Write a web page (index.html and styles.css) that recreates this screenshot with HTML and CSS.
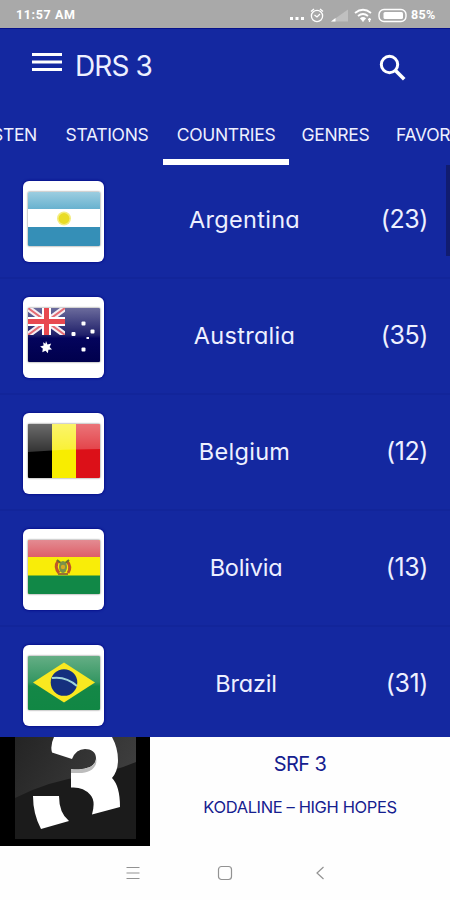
FILE: index.html
```html
<!DOCTYPE html>
<html lang="en">
<head>
<meta charset="utf-8">
<title>DRS 3</title>
<link rel="stylesheet" href="styles.css">
</head>
<body>
<div class="status">
  <span class="clock">11:57 AM</span>
  <svg class="status-icons" width="118" height="20" viewBox="289 4 118 20" fill="none" stroke="#fff">
    <g fill="#fff" stroke="none"><rect x="290" y="16" width="3" height="3"/><rect x="295.5" y="16" width="3" height="3"/><rect x="301" y="16" width="3" height="3"/></g>
    <g stroke-width="1.3"><circle cx="317" cy="15" r="5.6"/><path d="M311 10.500l3-2.500M323 10.500l-3-2.500M314.500 14l2.500 2 3-3"/></g>
    <path d="M331 20.500L348 8.500v12z" fill="#c0c0c0" stroke="none"/><path d="M331 20.500l4.500-3.500v3.500z" fill="#fff" stroke="none"/>
    <g stroke-width="1.8"><path d="M355 12q8-6.500 16 0M358 15q5-4 10 0M360.500 18q2.500-2 5 0"/></g><path d="M361.500 18.500h3l-1.500 2z" fill="#fff"/><path d="M368 18.500h3M369.500 17v4" stroke-width="1.3"/>
    <rect x="379" y="8.500" width="27" height="12" rx="5" stroke-width="1.4"/><rect x="383.500" y="11" width="19.500" height="7" rx="1.500" fill="#fff" stroke="none"/>
  </svg>
  <span class="percent">85%</span>
</div>
<header class="appbar">
  <svg width="30" height="20" viewBox="0 0 30 20" fill="#fff"><path d="M0 1h30v3H0zM0 8.500h30v3H0zM0 16h30v3H0z"/></svg>
  <h1>DRS 3</h1>
  <svg class="search" width="28" height="28" viewBox="0 0 28 28" fill="none" stroke="#fff"><circle cx="10.500" cy="10.500" r="8.200" stroke-width="3"/><path d="M16.500 16.500l8.700 8.700" stroke-width="3.600"/></svg>
</header>
<nav class="tabs">
  <span class="tab listen">LISTEN</span>
  <span class="tab stations">STATIONS</span>
  <span class="tab countries active">COUNTRIES</span>
  <span class="tab genres">GENRES</span>
  <span class="tab favorites">FAVORITES</span>
</nav>
<main class="list">
  <div class="scrollbar"></div>
  <div class="row"><div class="card"><div class="flag">
    <svg viewBox="0 0 72 54"><defs><linearGradient id="ar" x2="0" y2="1"><stop stop-color="#9ccde0"/><stop offset="1" stop-color="#68b2cf"/></linearGradient></defs><path fill="#fff" d="M0 0h72v54H0z"/><path fill="url(#ar)" d="M0 0h72v17H0z"/><path fill="#358fb7" d="M0 35h72v19H0z"/><circle cx="36" cy="26.500" r="7" fill="#f4ed80"/><circle cx="36" cy="26.500" r="5.400" fill="#e9dc24"/></svg>
  </div></div><span class="name">Argentina</span><span class="count">(23)</span></div>
  <div class="row"><div class="card"><div class="flag">
    <svg viewBox="0 0 72 54"><defs><linearGradient id="au" x2="0" y2="1"><stop stop-color="#6b6b9c"/><stop offset=".5" stop-color="#20206a"/><stop offset=".56" stop-color="#04045c"/><stop offset="1" stop-color="#00004d"/></linearGradient><clipPath id="jack"><path d="M0 0h37v27H0z"/></clipPath></defs><path fill="url(#au)" d="M0 0h72v54H0z"/><g clip-path="url(#jack)"><path d="M0 0l37 27M37 0L0 27" stroke="#f5edf2" stroke-width="6"/><path d="M0 0l37 27M37 0L0 27" stroke="#e46c75" stroke-width="2"/><path d="M18.500 0v27M0 13.500h37" stroke="#fff" stroke-width="9"/><path d="M18.500 0v27M0 13.500h37" stroke="#e84850" stroke-width="5"/></g><path fill="#fff" d="M18 33l1.500 3.400 3.700-1-1.600 3.500 2.400 2.700-3.600.2-.5 3.500-2.400-2.500-3.200 1.500.5-3.700-2.700-2 3.500-1.200-.5-3.200 2.300 1.500z"/><g fill="#fff"><rect x="53.500" y="13.500" width="4" height="4" rx="1"/><rect x="43.500" y="24" width="4" height="4" rx="1"/><rect x="62.500" y="21.500" width="4" height="4" rx="1"/><rect x="53.500" y="39.500" width="4" height="4" rx="1"/><rect x="58.500" y="29" width="2.500" height="2"/></g></svg>
  </div></div><span class="name">Australia</span><span class="count">(35)</span></div>
  <div class="row"><div class="card"><div class="flag">
    <svg viewBox="0 0 72 54"><defs><linearGradient id="shine" x2="0" y2="1"><stop stop-color="#fff" stop-opacity=".42"/><stop offset="1" stop-color="#fff" stop-opacity=".2"/></linearGradient></defs><path d="M0 0h24v54H0z"/><path fill="#f8ed00" d="M24 0h24v54H24z"/><path fill="#dc1018" d="M48 0h24v54H48z"/><path fill="url(#shine)" d="M0 0h72v25q-36 0-72 3z"/></svg>
  </div></div><span class="name">Belgium</span><span class="count">(12)</span></div>
  <div class="row"><div class="card"><div class="flag">
    <svg viewBox="0 0 72 54"><defs><linearGradient id="bo" x2="0" y2="1"><stop stop-color="#e38b92"/><stop offset="1" stop-color="#de5f68"/></linearGradient></defs><path fill="#f9ed08" d="M0 0h72v54H0z"/><path fill="url(#bo)" d="M0 0h72v17H0z"/><path fill="#118847" d="M0 35.500h72V54H0z"/><g fill="none"><path d="M30 21q-4 6 1 12M39 21q5 6 1 12" stroke="#bf5628" stroke-width="3"/><path d="M29 20l5 4M41 20l-5 4" stroke="#6d722c" stroke-width="2"/></g><ellipse cx="35" cy="27" rx="4" ry="6" fill="#7a9149"/><circle cx="35" cy="27" r="2.200" fill="#d6aa25"/><path d="M30 34h10" stroke="#a1722d" stroke-width="2"/></svg>
  </div></div><span class="name short">Bolivia</span><span class="count">(13)</span></div>
  <div class="row"><div class="card"><div class="flag">
    <svg viewBox="0 0 72 54"><defs><linearGradient id="br" x2="0" y2="1"><stop stop-color="#65ae85"/><stop offset=".48" stop-color="#349662"/><stop offset=".56" stop-color="#148747"/><stop offset="1" stop-color="#118744"/></linearGradient></defs><path fill="url(#br)" d="M0 0h72v54H0z"/><path fill="#f9e820" d="M5 26.500L36 6.500l31 20-31 20z"/><circle cx="36" cy="26.500" r="13.300" fill="#15307e"/><path d="M24 22q14-2 25 8" stroke="#9fd3da" stroke-width="2" fill="none"/></svg>
  </div></div><span class="name short">Brazil</span><span class="count">(31)</span></div>
</main>
<section class="player">
  <svg class="cover" width="150" height="109" viewBox="0 0 150 109"><defs><linearGradient id="cv" x2="1" y2=".3"><stop stop-color="#242424"/><stop offset="1" stop-color="#3d3d3d"/></linearGradient></defs><path d="M0 0h150v109H0z"/><path fill="#1b1b1b" d="M15 0h121v102H15z"/><path fill="url(#cv)" d="M15 0h121v25Q110 36 85 39 48 44 15 61z"/><path fill="#fff" d="M54 0h58q6 11 6 23 0 11-6 18 8 8 8 29L92 77.500q4-14-2-20-7-8-19-7V32q5 1 11 0c9-1 14-5 14-11s-5-9-11-9q-9 0-13 10L52 15.500q-2-7 2-15.500zM33 59h26q0 17 10 25l-28 8q-8-15-8-33z"/><path d="M71 32q5 1 11 0c9-1 14-5 14-11 2 8-4 14-14 15h-11z" fill="#bcbcbc"/></svg>
  <div class="now"><div class="station">SRF 3</div><div class="song">KODALINE – HIGH HOPES</div></div>
</section>
<footer class="navbar">
  <svg width="14" height="14" viewBox="0 0 14 14" fill="none" stroke="#929292" stroke-width="1.200"><path d="M.5 1.500h13M.5 7h13M.5 12.500h13"/></svg>
  <svg width="16" height="16" viewBox="0 0 16 16" fill="none" stroke="#929292" stroke-width="1.200"><rect x="1.500" y="1.500" width="13" height="13" rx="3"/></svg>
  <svg width="10" height="14" viewBox="0 0 10 14" fill="none" stroke="#929292" stroke-width="1.200"><path d="M8.500 1L2 7l6.500 6"/></svg>
</footer>
</body>
</html>
```
FILE: styles.css
```css
* { box-sizing: border-box; }
body { margin: 0; width: 450px; height: 900px; overflow: hidden; display: flex; flex-direction: column; background: #fefefe; color: #eef0ff; font-family: Inter, "Open Sans", sans-serif; font-feature-settings: "cv11" 1; }
svg { display: block; }
.status { height: 28px; flex: none; background: #a9a9a9; display: flex; align-items: center; padding: 1px 14px 0 16px; font: 700 12px Roboto, sans-serif; color: #fff; }
.clock { font-size: 12.5px; letter-spacing: .6px; }
.status-icons { margin-left: auto; margin-right: 4px; }
.percent { width: 25px; font-size: 12.5px; letter-spacing: .3px; }
.appbar { height: 76px; flex: none; background: #1428a0; border-top: 1px solid #06118a; display: flex; align-items: center; padding: 0 43px 0 32px; }
.appbar > svg:first-child { margin-top: -9px; }
.appbar h1 { margin: -2px 0 0 13px; font-weight: 400; font-size: 28px; letter-spacing: -.9px; }
.search { margin-left: auto; margin-top: 3px; }
.tabs { width: 450px; height: 61px; flex: none; background: #1428a0; display: flex; justify-content: flex-start; position: relative; z-index: 1; overflow: hidden; white-space: nowrap; }
.tab { flex: none; height: 61px; line-height: 62px; text-align: center; font-size: 17.5px; font-weight: 400; letter-spacing: -.3px; }
.listen { width: 93px; margin-left: -42px; text-align: right; padding-right: 14px; }
.stations { width: 112px; }
.countries { width: 126px; }
.genres { width: 93px; }
.favorites { flex: 0 0 68px; overflow: hidden; text-align: left; padding-left: 14px; }
.active { border-bottom: 6px solid #fff; }
.list { height: 574px; flex: none; margin-top: -2px; overflow: hidden; background: #1428a0; position: relative; }
.scrollbar { position: absolute; right: 0; top: 2px; width: 4px; height: 91px; background: #111c70; }
.row { height: 116px; display: grid; grid-template-columns: 81px 1fr 61px; align-items: center; padding: 3px 22px 0 23px; border-bottom: 2px solid #12259a; }
.card { height: 81px; background: #fff; border-radius: 6px; padding: 11px 4.5px; box-shadow: 0 0 2px 1px #08128e; }
.flag { width: 72px; height: 54px; border-radius: 1px; overflow: hidden; box-shadow: 0 0 2px #555; }
.flag svg { width: 72px; height: 54px; }
.name { text-align: center; font-size: 23.5px; letter-spacing: .3px; padding-left: 18px; margin-top: -4px; }
.short { letter-spacing: -.2px; padding-left: 21px; }
.count { text-align: right; font-size: 25px; letter-spacing: -.4px; margin-top: -5px; }
.player { height: 109px; flex: none; display: flex; }
.now { flex: 1; color: #15208f; text-align: center; }
.station { margin-top: 14px; font-size: 20px; line-height: 26px; letter-spacing: -.6px; }
.song { margin-top: 17px; font-size: 16.5px; line-height: 26px; letter-spacing: -.38px; }
.navbar { height: 54px; display: flex; align-items: center; padding-left: 126px; }
.navbar svg:nth-child(2) { margin-left: 77px; }
.navbar svg:nth-child(3) { margin-left: 82px; }
```
